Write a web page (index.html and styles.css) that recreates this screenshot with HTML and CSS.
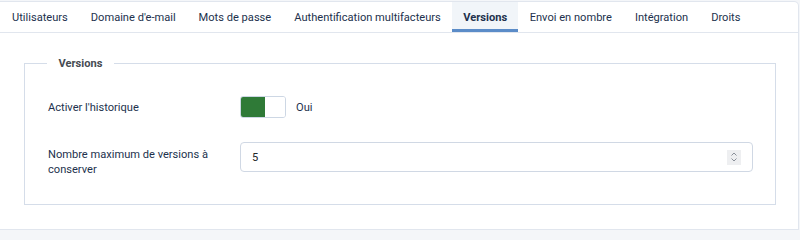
FILE: index.html
```html
<!DOCTYPE html>
<html lang="fr">
<head>
<meta charset="utf-8">
<title>Versions</title>
<link rel="stylesheet" href="styles.css">
</head>
<body>
<div class="card">
  <nav class="tabs">
    <span class="tab">Utilisateurs</span>
    <span class="tab">Domaine d'e-mail</span>
    <span class="tab">Mots de passe</span>
    <span class="tab">Authentification multifacteurs</span>
    <span class="tab active">Versions</span>
    <span class="tab">Envoi en nombre</span>
    <span class="tab">Intégration</span>
    <span class="tab">Droits</span>
  </nav>
  <div class="content">
    <fieldset class="group">
      <legend class="legend">Versions</legend>
      <div class="row row-toggle">
        <div class="label">Activer l'historique</div>
        <div class="control">
          <span class="switch"><span class="switch-on"></span><span class="switch-off"></span></span>
          <span class="switch-text">Oui</span>
        </div>
      </div>
      <div class="row row-input">
        <div class="label">Nombre maximum de versions à conserver</div>
        <div class="control">
          <div class="input">
            <span class="value">5</span>
            <span class="spinner">
              <svg width="8" height="12" viewBox="0 0 8 12"><path d="M1.5 4.5 L4 2 L6.5 4.5 M1.5 7.5 L4 10 L6.5 7.5" fill="none" stroke="#8a9099" stroke-width="1"/></svg>
            </span>
          </div>
        </div>
      </div>
    </fieldset>
  </div>
</div>
</body>
</html>
```
FILE: styles.css
```css
html, body {
  margin: 0;
  padding: 0;
}
body {
  background: #f4f6f9;
  font-family: Roboto, "Liberation Sans", sans-serif;
  font-size: 11.1px;
  color: #22314d;
  padding-top: 1px;
  padding-right: 1px;
}
.card {
  background: #ffffff;
  border: 1px solid #e1e6ee;
  border-left: none;
  border-top-right-radius: 5px;
  box-sizing: border-box;
}
.tabs {
  display: flex;
  height: 30px;
  border-bottom: 1px solid #e1e6ee;
  overflow: hidden;
}
.tab {
  display: flex;
  align-items: center;
  padding: 0 11.5px;
  height: 30px;
  box-sizing: border-box;
  color: #22314d;
  white-space: nowrap;
}
.tab:first-child {
  padding-left: 12px;
}
.tab.active {
  background: #f1f5f9;
  font-weight: 700;
  border-bottom: 3px solid #5b8cc8;
  padding-top: 3px;
  padding-left: 11px;
  padding-right: 11px;
}
.content {
  padding: 24px 22px 24px 24px;
}
.group {
  margin: 0;
  border: 1px solid #d5dde9;
  padding: 26px 0 27px 23px;
  min-width: 0;
}
.legend {
  margin-left: -1px;
  padding: 0 11.5px;
  font-weight: 700;
  color: #464b52;
}
.row {
  display: flex;
  align-items: center;
}
.label {
  width: 192px;
  flex: none;
  line-height: 15px;
}
.row-toggle {
  height: 22px;
}
.row-input {
  margin-top: 24px;
  align-items: flex-start;
}
.row-input .label {
  padding-top: 4.5px;
  width: 180px;
  margin-right: 12px;
}
.control {
  display: flex;
  align-items: center;
  flex: 1;
}
.switch {
  display: flex;
  width: 46px;
  height: 22px;
  border: 1px solid #cdd7e4;
  border-radius: 3px;
  box-sizing: border-box;
  overflow: hidden;
}
.switch-on {
  width: 24px;
  background: #2f7a37;
}
.switch-off {
  flex: 1;
  background: #ffffff;
}
.switch-text {
  margin-left: 10px;
}
.input {
  display: flex;
  align-items: center;
  width: 513px;
  height: 30px;
  box-sizing: border-box;
  border: 1px solid #d0d8e4;
  border-radius: 4px;
  padding: 0 11px 0 11px;
}
.value {
  color: #22262a;
}
.spinner {
  margin-left: auto;
  width: 14px;
  height: 15px;
  background: #eeeff1;
  display: flex;
  align-items: center;
  justify-content: center;
}
```
